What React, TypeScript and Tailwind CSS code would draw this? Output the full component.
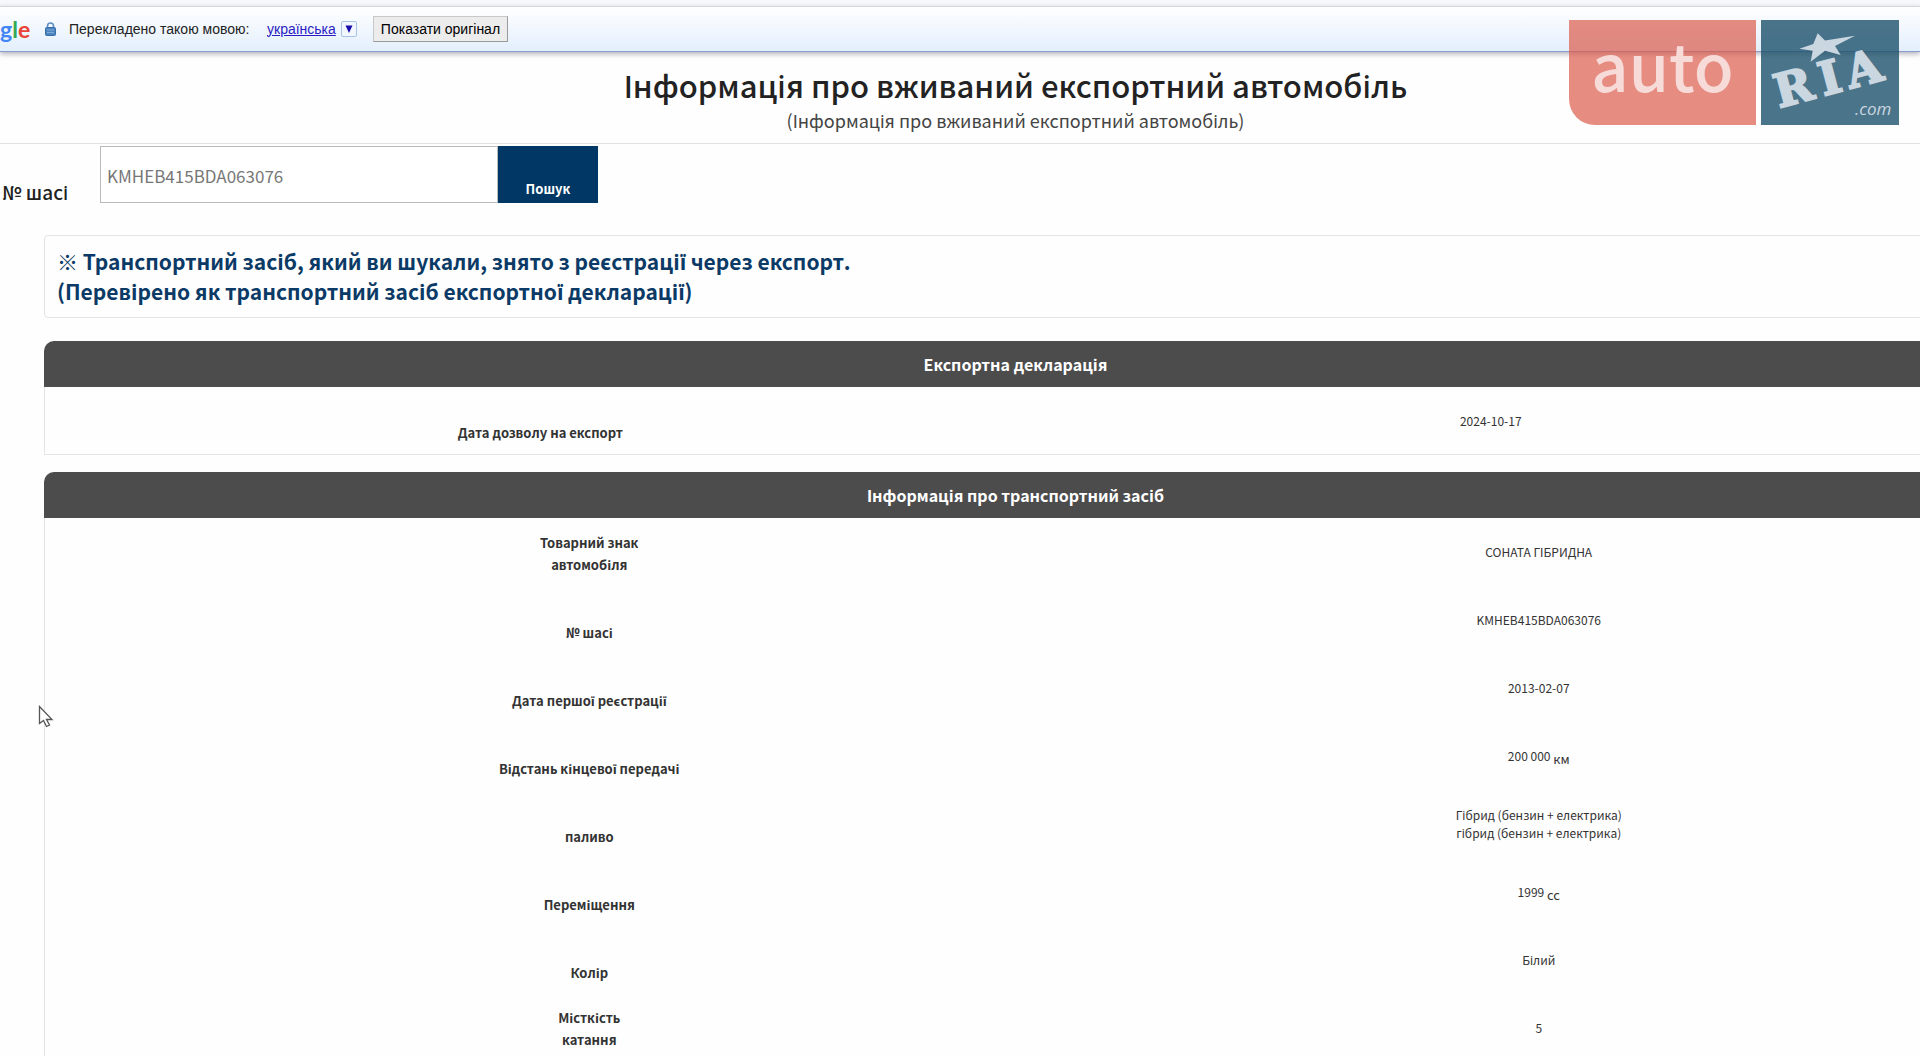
import { ReactNode } from 'react';

type Row = { label: ReactNode; value: ReactNode };

const exportRows: Row[] = [{ label: 'Дата дозволу на експорт', value: '2024-10-17' }];

const vehicleRows: Row[] = [
  { label: <>Товарний знак<br />автомобіля</>, value: 'СОНАТА ГІБРИДНА' },
  { label: '№ шасі', value: 'KMHEB415BDA063076' },
  { label: 'Дата першої реєстрації', value: '2013-02-07' },
  { label: 'Відстань кінцевої передачі', value: <>200 000 <Unit>км</Unit></> },
  { label: 'паливо', value: <>Гібрид (бензин + електрика)<br />гібрид (бензин + електрика)</> },
  { label: 'Переміщення', value: <>1999 <Unit>сс</Unit></> },
  { label: 'Колір', value: 'Білий' },
  { label: <>Місткість<br />катання</>, value: '5' },
];

function Unit({ children }: { children: ReactNode }) {
  return <sub className="text-[13px] leading-none">{children}</sub>;
}

function TranslateBar() {
  return (
    <div className="bg-[#f7f8fc] pt-[6px]">
      <div className="flex h-[46px] items-center border-t border-b border-t-[#d5d7de] border-b-[#8d9ccd] bg-linear-to-b from-white to-[#e3effc] font-['Liberation_Sans',sans-serif] text-[14px] text-[#222] shadow-[0_2px_5px_rgba(60,60,90,0.4)]">
        <div className="flex w-[29px] font-['Lato',sans-serif] text-[23px] leading-[30px] font-bold" aria-label="Google">
          <span className="text-[#4285f4]">g</span>
          <span className="text-[#34a853]">l</span>
          <span className="text-[#ea4335]">e</span>
        </div>
        <svg className="ml-4 shrink-0" width="11" height="14" viewBox="0 0 11 14" aria-hidden="true">
          <path d="M2.5 7V4a3 3 0 0 1 6 0v3" fill="none" stroke="#5f8fc4" strokeWidth="1.6" />
          <rect x="0.5" y="5.5" width="10" height="8" rx="1" fill="#4c84c0" stroke="#3a6ea8" />
          <path d="M2 8h7M2 10.5h7" stroke="#7fabd8" />
        </svg>
        <span className="ml-[13px] w-[198px] whitespace-nowrap">Перекладено такою мовою:</span>
        <a href="#language" className="flex items-center gap-[5px] text-[#2b1cc4]">
          <span className="underline">українська</span>
          <span className="flex h-4 w-4 items-center justify-center rounded-[2px] border border-[#a9c2e2] bg-[#f2f7fe]">
            <svg width="8" height="8" viewBox="0 0 8 8" aria-hidden="true">
              <path d="M0.5 0.5h7L4 8z" fill="#1a0dab" />
            </svg>
          </span>
        </a>
        <button type="button" className="ml-4 h-[26px] border border-t-[#c8c8c8] border-r-[#9a9a9a] border-b-[#9a9a9a] border-l-[#c8c8c8] bg-[#ececec] px-[7px] text-black">
          Показати оригінал
        </button>
      </div>
    </div>
  );
}

function Watermark() {
  return (
    <div className="absolute top-5 right-[21px] flex h-[105px] gap-[5px]" aria-label="auto RIA .com">
      <div className="flex w-[187px] justify-center rounded-bl-[26px] bg-[rgba(219,91,76,0.7)] font-['Noto_Sans_CJK_KR',sans-serif] text-[65px] leading-[88px] font-medium text-[#f7dbd8]">
        auto
      </div>
      <svg width="138" height="105" viewBox="0 0 138 105" role="img" aria-label="RIA .com" className="bg-[rgba(29,81,107,0.8)]">
        <polygon points="56.7,13.3 64,20.5 94,15.7 74,26 79.7,35 64,30.7 49.7,41.7 51.7,30.7 38.3,28.7 52.3,24" fill="#cad6e0" />
        <text transform="translate(18 88) rotate(-15)" fill="#cad6e0" stroke="#cad6e0" strokeWidth="2" fontFamily="DejaVu Serif" fontWeight="700" fontSize="46">
          <tspan x="0">R</tspan>
          <tspan x="46">I</tspan>
          <tspan x="74">A</tspan>
        </text>
        <text x="94" y="95" fill="#cad6e0" fontFamily="Open Sans" fontStyle="italic" fontSize="17">.com</text>
      </svg>
    </div>
  );
}

function InfoTable({ title, rows, labelCell, valueCell }: { title: string; rows: Row[]; labelCell: string; valueCell: string }) {
  return (
    <table className="w-full table-fixed border-separate border-spacing-0 text-center">
      <thead>
        <tr>
          <th colSpan={2} className="h-[46px] rounded-t-[10px] bg-[#4c4c4c] text-[16px] leading-6 font-bold text-white">{title}</th>
        </tr>
      </thead>
      <tbody>
        {rows.map((row, i) => (
          <tr key={i}>
            <th scope="row" className={`h-[68px] border-l border-[#e4e4e4] pb-[10px] align-bottom text-[13px] leading-[22px] font-bold text-[#333] ${labelCell} ${i === rows.length - 1 ? 'border-b' : ''}`}>
              {row.label}
            </th>
            <td className={`border-r border-[#e4e4e4] align-middle text-[12px] leading-[18px] text-[#333] ${valueCell} ${i === rows.length - 1 ? 'border-b' : ''}`}>
              {row.value}
            </td>
          </tr>
        ))}
      </tbody>
    </table>
  );
}

export default function App() {
  return (
    <div className="relative h-screen overflow-hidden bg-[#fefefe] font-['Noto_Sans_CJK_KR','Noto_Sans',sans-serif] text-[#222]">
      <TranslateBar />
      <main className="-mr-[111px]">
        <header className="border-b border-[#e2e2e2] pt-[11px] pb-[10px] text-center">
          <h1 className="text-[31px] leading-[44px] font-medium">Інформація про вживаний експортний автомобіль</h1>
          <p className="text-[18px] leading-[26px] text-[#444]">(Інформація про вживаний експортний автомобіль)</p>
        </header>
        <form className="flex h-[59px] items-end pl-[2px]" onSubmit={(e) => e.preventDefault()}>
          <label htmlFor="chassis" className="w-[98px] text-[19px] leading-[22px] font-medium">№ шасі</label>
          <input id="chassis" type="text" defaultValue="KMHEB415BDA063076" className="h-[57px] w-[398px] border border-[#bbb] bg-white pt-[2px] pl-[6px] text-[17px] text-[#777] outline-none" />
          <button type="submit" className="flex h-[57px] w-[100px] items-end justify-center bg-[#003764] pb-1 text-[13px] leading-5 font-bold text-white">Пошук</button>
        </form>
        <div className="mt-8 px-11">
          <div className="rounded-[4px] border border-[#e4e4e4] px-3 pt-[10px] pb-[11px] text-[21px] leading-[30px] font-bold text-[#0b3a66]">
            ※ Транспортний засіб, який ви шукали, знято з реєстрації через експорт.
            <br />
            (Перевірено як транспортний засіб експортної декларації)
          </div>
          <div className="mt-[23px] flex flex-col gap-[17px]">
            <InfoTable title="Експортна декларація" rows={exportRows} labelCell="pl-5" valueCell="pr-5" />
            <InfoTable title="Інформація про транспортний засіб" rows={vehicleRows} labelCell="pl-[118px]" valueCell="pl-[76px]" />
          </div>
        </div>
      </main>
      <Watermark />
      <svg className="absolute top-[705px] left-[38px]" width="16" height="23" viewBox="0 0 16 23" aria-hidden="true">
        <path d="M1.5 1.5v17l4-3 3 6 3-1.5-3-5.5h5.5z" fill="#fff" stroke="#555" strokeWidth="1.3" />
      </svg>
    </div>
  );
}
